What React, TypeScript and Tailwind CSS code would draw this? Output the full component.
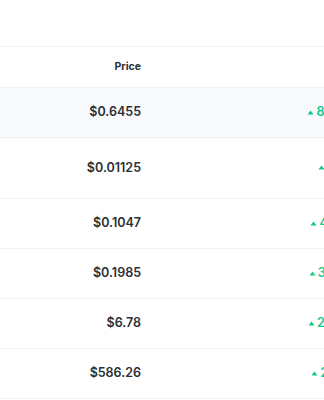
import React from "react";

const rows = [
  { price: "$0.6455", change: "8.46%", h: "h-[50px]", highlight: true },
  { price: "$0.01125", change: "1.2%", h: "h-[61px]", highlight: false },
  { price: "$0.1047", change: "4.91%", h: "h-[50px]", highlight: false },
  { price: "$0.1985", change: "3.27%", h: "h-[50px]", highlight: false },
  { price: "$6.78", change: "2.55%", h: "h-[50px]", highlight: false },
  { price: "$586.26", change: "2.18%", h: "h-[50px]", highlight: false },
];

function CaretUp() {
  return (
    <svg width="7" height="5" viewBox="0 0 7 5" className="mr-[2px] mb-[1px] fill-[#16c784]">
      <path d="M3.5 0.5 L6.5 4.5 L0.5 4.5 Z" />
    </svg>
  );
}

export default function App() {
  return (
    <div
      className="w-[324px] h-[400px] overflow-hidden bg-white text-[#2b2f36]"
      style={{ fontFamily: "Inter, 'Noto Sans', sans-serif" }}
    >
      <div className="h-[47px] border-b border-[#eff2f5]" />
      <div className="flex items-center h-[41px] border-b border-[#eff2f5]">
        <div className="w-[141px] shrink-0 text-right text-[10.5px] font-bold">Price</div>
      </div>
      {rows.map((r, i) => (
        <div
          key={i}
          className={`flex items-center border-b border-[#eff2f5] ${r.h} ${r.highlight ? "bg-[#f8fafd]" : "bg-white"}`}
        >
          <div className="w-[141px] shrink-0 text-right text-[12.5px] font-semibold">{r.price}</div>
          <div className="w-[216px] shrink-0 flex items-center justify-end text-[12.5px] font-semibold text-[#16c784]">
            <CaretUp />
            {r.change}
          </div>
        </div>
      ))}
    </div>
  );
}
